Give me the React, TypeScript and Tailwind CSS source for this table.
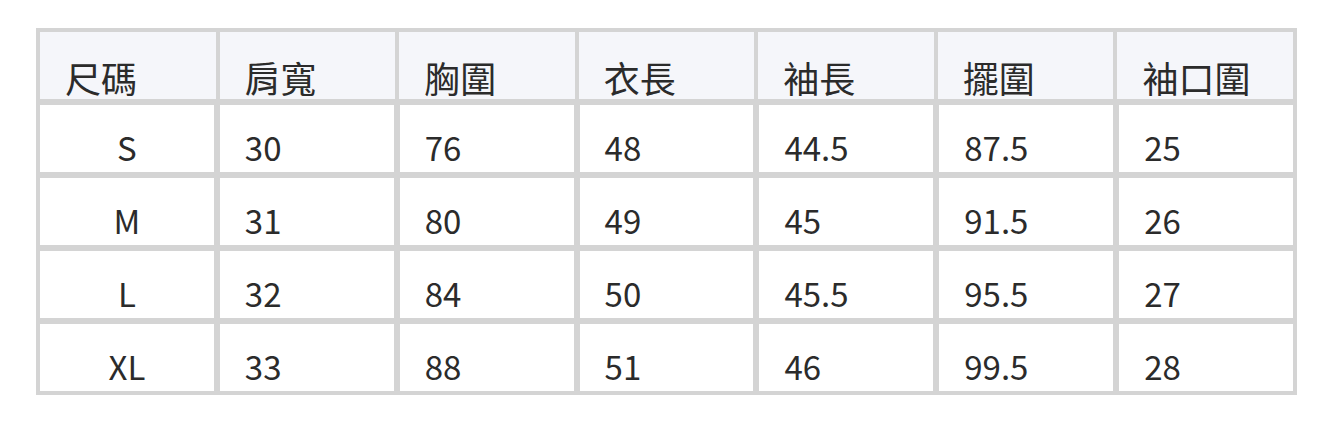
import React from "react";

const headers = ["尺碼", "肩寬", "胸圍", "衣長", "袖長", "擺圍", "袖口圍"];
const rows = [
  ["S", "30", "76", "48", "44.5", "87.5", "25"],
  ["M", "31", "80", "49", "45", "91.5", "26"],
  ["L", "32", "84", "50", "45.5", "95.5", "27"],
  ["XL", "33", "88", "51", "46", "99.5", "28"],
];

export default function App() {
  return (
    <div
      className="w-[1332px] h-[422px] bg-white pt-[28px] pl-[36px] text-[#2b2b2b] font-normal"
      style={{ fontFamily: '"Noto Sans CJK TC", "Noto Sans", sans-serif' }}
    >
      <div className="w-[1261px] bg-[#d4d4d4] p-[4px] flex flex-col gap-[6px]">
        <div className="grid grid-cols-7 gap-[4px] h-[67px]">
          {headers.map((h) => (
            <div
              key={h}
              className="bg-[#f5f6fa] flex items-center pl-[25px] pt-[22px] text-[36px] leading-none"
            >
              {h}
            </div>
          ))}
        </div>
        {rows.map((r) => (
          <div key={r[0]} className="grid grid-cols-7 gap-[6px] h-[67px]">
            {r.map((c, i) => (
              <div
                key={i}
                className={
                  "bg-white flex items-center pt-[18px] text-[33px] leading-none " +
                  (i === 0 ? "justify-center" : "pl-[25px]")
                }
              >
                {c}
              </div>
            ))}
          </div>
        ))}
      </div>
    </div>
  );
}
